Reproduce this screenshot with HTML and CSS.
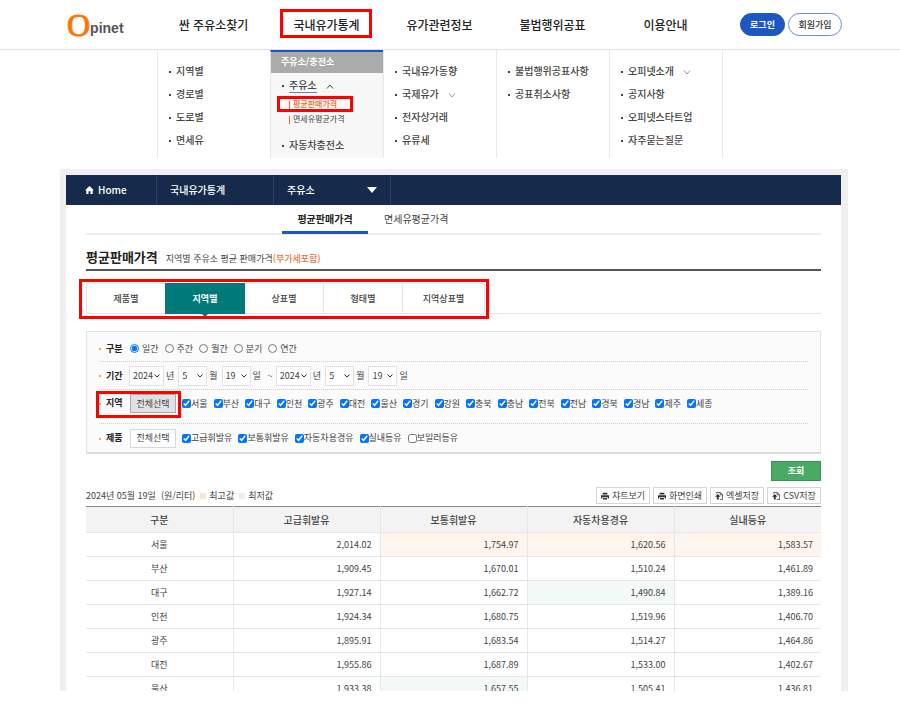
FILE: index.html
```html
<!DOCTYPE html>
<html lang="ko">
  <head>
    <meta charset="UTF-8" />
    <meta name="viewport" content="width=device-width, initial-scale=1.0" />
    <title>Opinet - 평균판매가격</title>
    <link rel="stylesheet" href="styles.css">
  </head>
  <body>
    <header class="header">
      <a href="#" class="logo"><span class="logo-o">O</span><span class="logo-text">pinet</span></a>
      <nav class="gnb">
        <a href="#">싼 주유소찾기</a>
        <a href="#" class="mark mark-gnb">국내유가통계</a>
        <a href="#">유가관련정보</a>
        <a href="#">불법행위공표</a>
        <a href="#">이용안내</a>
      </nav>
      <div class="user">
        <button type="button" class="login">로그인</button>
        <button type="button" class="join">회원가입</button>
      </div>
    </header>

    <!-- Drop-down menu -->
    <div class="submenu">
      <ul class="menu">
        <li><a href="#">지역별</a></li>
        <li><a href="#">경로별</a></li>
        <li><a href="#">도로별</a></li>
        <li><a href="#">면세유</a></li>
      </ul>
      <div class="menu-active">
        <h2>주유소/충전소</h2>
        <ul>
          <li><a href="#" class="current">주유소</a><svg class="arrow open" viewBox="0 0 8 5"><path d="M1 4.5 4 1l3 3.5" /></svg>
            <ul class="depth3">
              <li class="mark mark-depth"><a href="#" class="on">평균판매가격</a></li>
              <li><a href="#">면세유평균가격</a></li>
            </ul>
          </li>
          <li><a href="#">자동차충전소</a></li>
        </ul>
      </div>
      <ul class="menu">
        <li><a href="#">국내유가동향</a></li>
        <li><a href="#">국제유가</a><svg class="arrow" viewBox="0 0 8 5"><path d="M1 .5 4 4l3-3.5" /></svg></li>
        <li><a href="#">전자상거래</a></li>
        <li><a href="#">유류세</a></li>
      </ul>
      <ul class="menu">
        <li><a href="#">불법행위공표사항</a></li>
        <li><a href="#">공표취소사항</a></li>
      </ul>
      <ul class="menu">
        <li><a href="#">오피넷소개</a><svg class="arrow" viewBox="0 0 8 5"><path d="M1 .5 4 4l3-3.5" /></svg></li>
        <li><a href="#">공지사항</a></li>
        <li><a href="#">오피넷스타트업</a></li>
        <li><a href="#">자주묻는질문</a></li>
      </ul>
    </div>

    <main class="frame">
      <nav class="location">
        <a href="#" class="home">
          <svg viewBox="0 0 10 9"><path d="M5 0 10 4.7H8.6V9H6.1V6H3.9v3H1.4V4.7H0z" /></svg>Home
        </a>
        <a href="#">국내유가통계</a>
        <a href="#">주유소<svg class="caret" viewBox="0 0 10 6"><path d="M0 0h10L5 6z" /></svg></a>
      </nav>

      <div class="content">
        <nav class="subtabs">
          <a href="#" class="on">평균판매가격</a>
          <a href="#">면세유평균가격</a>
        </nav>

        <div class="title">
          <h1>평균판매가격</h1>
          <p>지역별 주유소 평균 판매가격<em>(부가세포함)</em></p>
        </div>

        <div class="tabs">
          <div class="tab-list mark mark-tabs">
            <a href="#">제품별</a>
            <a href="#" class="on">지역별</a>
            <a href="#">상표별</a>
            <a href="#">형태별</a>
            <a href="#">지역상표별</a>
          </div>
        </div>

        <!-- Search conditions -->
        <form class="search">
          <div class="box">
            <div class="row row-type">
              <strong>구분</strong>
              <label><input type="radio" name="type" checked />일간</label>
              <label><input type="radio" name="type" />주간</label>
              <label><input type="radio" name="type" />월간</label>
              <label><input type="radio" name="type" />분기</label>
              <label><input type="radio" name="type" />연간</label>
            </div>
            <div class="row row-term">
              <strong>기간</strong>
              <label><select class="year"><option>2024</option></select>년</label>
              <label><select><option>5</option></select>월</label>
              <label><select><option>19</option></select>일</label>
              <span class="tilde">~</span>
              <label><select class="year"><option>2024</option></select>년</label>
              <label><select><option>5</option></select>월</label>
              <label><select><option>19</option></select>일</label>
            </div>
            <div class="row row-area">
              <div class="mark mark-area">
                <strong>지역</strong>
                <button type="button" class="all pressed">전체선택</button>
              </div>
              <label><input type="checkbox" checked />서울</label>
              <label><input type="checkbox" checked />부산</label>
              <label><input type="checkbox" checked />대구</label>
              <label><input type="checkbox" checked />인천</label>
              <label><input type="checkbox" checked />광주</label>
              <label><input type="checkbox" checked />대전</label>
              <label><input type="checkbox" checked />울산</label>
              <label><input type="checkbox" checked />경기</label>
              <label><input type="checkbox" checked />강원</label>
              <label><input type="checkbox" checked />충북</label>
              <label><input type="checkbox" checked />충남</label>
              <label><input type="checkbox" checked />전북</label>
              <label><input type="checkbox" checked />전남</label>
              <label><input type="checkbox" checked />경북</label>
              <label><input type="checkbox" checked />경남</label>
              <label><input type="checkbox" checked />제주</label>
              <label><input type="checkbox" checked />세종</label>
            </div>
            <div class="row row-product">
              <strong>제품</strong>
              <button type="button" class="all">전체선택</button>
              <label><input type="checkbox" checked />고급휘발유</label>
              <label><input type="checkbox" checked />보통휘발유</label>
              <label><input type="checkbox" checked />자동차용경유</label>
              <label><input type="checkbox" checked />실내등유</label>
              <label><input type="checkbox" />보일러등유</label>
            </div>
          </div>
          <button type="button" class="submit">조회</button>
        </form>

        <div class="tools">
          <p>2024년 05월 19일 &nbsp;(원/리터)</p>
          <span class="legend high">최고값</span>
          <span class="legend low">최저값</span>
          <div class="buttons">
            <button type="button"><svg viewBox="0 0 10 10"><path d="M2 1h6v2H2zM0 4h10v4H8.5V6.5h-7V8H0zM2.5 7.5h5v2h-5z" /></svg>챠트보기</button>
            <button type="button"><svg viewBox="0 0 10 10"><path d="M2 1h6v2H2zM0 4h10v4H8.5V6.5h-7V8H0zM2.5 7.5h5v2h-5z" /></svg>화면인쇄</button>
            <button type="button"><svg viewBox="0 0 10 10"><path d="M0 6 3.5 2.5 7 6H4.7v3.5H2.3V6z" /><path class="line" d="M2 2V.5h4.500L9.500 3.500v6H6M6.500.5v3h3" /></svg>엑셀저장</button>
            <button type="button"><svg viewBox="0 0 10 10"><path d="M0 6 3.5 2.5 7 6H4.7v3.5H2.3V6z" /><path class="line" d="M2 2V.5h4.500L9.500 3.500v6H6M6.500.5v3h3" /></svg>CSV저장</button>
          </div>
        </div>

        <table class="prices">
          <thead>
            <tr><th>구분</th><th>고급휘발유</th><th>보통휘발유</th><th>자동차용경유</th><th>실내등유</th></tr>
          </thead>
          <tbody>
            <tr><th>서울</th><td>2,014.02</td><td class="high">1,754.97</td><td class="high">1,620.56</td><td class="high">1,583.57</td></tr>
            <tr><th>부산</th><td>1,909.45</td><td>1,670.01</td><td>1,510.24</td><td>1,461.89</td></tr>
            <tr><th>대구</th><td>1,927.14</td><td>1,662.72</td><td class="low">1,490.84</td><td>1,389.16</td></tr>
            <tr><th>인천</th><td>1,924.34</td><td>1,680.75</td><td>1,519.96</td><td>1,406.70</td></tr>
            <tr><th>광주</th><td>1,895.91</td><td>1,683.54</td><td>1,514.27</td><td>1,464.86</td></tr>
            <tr><th>대전</th><td>1,955.86</td><td>1,687.89</td><td>1,533.00</td><td>1,402.67</td></tr>
            <tr><th>울산</th><td>1,933.38</td><td class="low">1,657.55</td><td>1,505.41</td><td>1,436.81</td></tr>
          </tbody>
        </table>
      </div>
    </main>
  </body>
</html>
```
FILE: styles.css
```css
* {
  box-sizing: border-box;
}
body {
  margin: 0;
  padding-bottom: 23px;
  height: 100vh;
  display: flex;
  flex-direction: column;
  font-family: "Noto Sans CJK KR", sans-serif;
  font-size: 9px;
  line-height: 14px;
  color: #444;
  background: #fff;
}
h1, h2, p, ul {
  margin: 0;
  padding: 0;
}
ul {
  list-style: none;
}
a {
  color: inherit;
  text-decoration: none;
}
button, select {
  font: inherit;
  color: inherit;
  padding: 0;
}
em {
  font-style: normal;
  font-weight: 500;
  color: #e8743b;
}

/* red highlight boxes */
.mark {
  position: relative;
}
.mark::after {
  content: "";
  position: absolute;
  border: 3px solid #f00;
  pointer-events: none;
}
.mark-gnb::after {
  inset: 8px 11px 11px 10px;
}
.mark-depth::after {
  inset: 0 30px -1px 6px;
}
.mark-tabs::after {
  inset: -4px -4px -5px -7px;
}
.mark-area::after {
  inset: -3px -5px -5px -3px;
}

/* header */
.header {
  display: flex;
  align-items: center;
  height: 50px;
  border-bottom: 1px solid #e2e2e2;
}
.logo {
  display: flex;
  align-items: center;
  width: 157px;
  height: 44px;
  padding-left: 67px;
}
.logo-o {
  font: 32px/32px "Liberation Serif", serif;
  color: #ff7500;
  -webkit-text-stroke: 1px #ff7500;
}
.logo-text {
  padding-top: 6px;
  font: bold 14px/20px "Liberation Sans", sans-serif;
  color: #555;
}
.gnb {
  display: flex;
}
.gnb a {
  width: 113px;
  text-align: center;
  font-size: 12px;
  font-weight: 500;
  line-height: 48px;
  color: #222;
}
.user {
  display: flex;
  gap: 3px;
  margin-left: 18px;
}
.user button {
  height: 23px;
  border: 1px solid #1d57c4;
  border-radius: 12px;
  font-weight: 500;
}
.user .login {
  width: 45px;
  background: #1d57c4;
  color: #fff;
  font-weight: 700;
}
.user .join {
  width: 54px;
  background: #fff;
  border-color: #6b91dc;
  color: #333;
}

/* submenu */
.submenu {
  display: flex;
  width: 566px;
  height: 108px;
  margin: 0 0 11px 157px;
  border-right: 1px solid #e8e8e8;
  font-size: 10px;
  font-weight: 500;
}
.menu, .menu-active {
  width: 113px;
  border-left: 1px solid #e8e8e8;
}
.menu {
  padding: 9px 0 0 11px;
  line-height: 23px;
}
.menu > li::before, .menu-active > ul > li::before {
  content: "";
  display: inline-block;
  width: 2px;
  height: 2px;
  margin-right: 5px;
  vertical-align: middle;
  background: #444;
}
.arrow {
  width: 8px;
  height: 5px;
  margin-left: 9px;
  vertical-align: middle;
  fill: none;
  stroke: #999;
}
.arrow.open {
  stroke: #444;
}
.menu-active {
  background: #f7f7f7;
  border-top: 2px solid #1d57c4;
}
.menu-active h2 {
  height: 21px;
  padding-left: 10px;
  background: #ababab;
  color: #fff;
  font-size: 9px;
  font-weight: 700;
  line-height: 20px;
}
.menu-active > ul > li {
  padding-left: 11px;
  line-height: 23px;
}
.menu-active .current {
  border-bottom: 1px solid #5b84d6;
}
.depth3 {
  margin: 0 0 7px -11px;
  font-size: 8px;
  font-weight: 400;
}
.depth3 li {
  height: 15px;
  padding-left: 18px;
  line-height: 15px;
}
.depth3 a::before {
  content: "";
  display: inline-block;
  width: 1px;
  height: 8px;
  margin-right: 3px;
  vertical-align: middle;
  background: #f0682a;
}
.depth3 .on {
  font-weight: 500;
  color: #f0682a;
}

/* page frame */
.frame {
  flex: 1;
  min-height: 0;
  margin: 0 52px 0 60px;
  border: 6px solid #f0efed;
  border-right-width: 7px;
  border-bottom: 0;
  overflow: hidden;
}
.location {
  display: flex;
  height: 30px;
  background: #162b4b;
  color: #fff;
  font-size: 10px;
  font-weight: 500;
  line-height: 30px;
}
.location a {
  display: flex;
  align-items: center;
  width: 117px;
  padding: 0 13px;
  border-right: 1px solid #2c4163;
}
.location .home {
  width: 91px;
  padding-left: 19px;
}
.location svg {
  fill: #fff;
}
.home svg {
  width: 9px;
  height: 8px;
  margin-right: 4px;
}
.location .caret {
  width: 10px;
  height: 6px;
  margin-left: auto;
}
.content {
  padding: 0 20px;
}
.subtabs {
  display: flex;
  gap: 16px;
  height: 30px;
  padding-left: 196px;
  border-bottom: 2px solid #eee;
  font-size: 10px;
  line-height: 28px;
}
.subtabs .on {
  width: 86px;
  height: 29px;
  border-bottom: 3px solid #1d57c4;
  text-align: center;
  font-weight: 700;
  color: #222;
}
.title {
  display: flex;
  align-items: center;
  gap: 8px;
  height: 36px;
  padding-top: 10px;
  border-bottom: 2px solid #555;
}
.title h1 {
  font-size: 13px;
  font-weight: 700;
  line-height: 20px;
  color: #222;
}
.title p {
  padding-top: 4px;
}

/* tabs */
.tabs {
  display: flex;
  height: 31px;
  margin-top: 12px;
  border-bottom: 1px solid #e5e5e5;
}
.tab-list {
  display: flex;
  height: 31px;
}
.tab-list a {
  width: 80px;
  margin-right: -1px;
  border: 1px solid #e5e5e5;
  text-align: center;
  font-weight: 500;
  line-height: 30px;
}
.tab-list a:last-child {
  width: 83px;
  margin-right: 0;
}
.tab-list .on {
  position: relative;
  background: #00797a;
  border-color: #00797a;
  color: #fff;
  font-weight: 700;
}
.tab-list .on::after {
  content: "";
  position: absolute;
  top: 100%;
  left: 50%;
  margin-left: -4px;
  border: 4px solid transparent;
  border-top-color: #00797a;
  border-bottom: 0;
}

/* search box */
.search {
  display: flex;
  flex-direction: column;
  align-items: flex-end;
  gap: 7px;
  margin-top: 17px;
}
.box {
  width: 100%;
  padding: 0 12px;
  border: 1px solid #e2e2e2;
  border-bottom: 2px solid #dcdcdc;
  background: #fbfbfb;
}
.row {
  display: flex;
  align-items: center;
  height: 28px;
  border-bottom: 1px dotted #ccc;
}
.row strong {
  width: 31px;
  color: #222;
}
.row strong::before {
  content: "";
  display: inline-block;
  width: 2px;
  height: 2px;
  margin-right: 5px;
  vertical-align: middle;
  background: #f0a070;
}
.row label {
  display: flex;
  align-items: center;
}
.row input {
  width: 9px;
  height: 9px;
  margin: 0;
}
.row-type {
  height: 30px;
  padding-top: 4px;
}
.row-type label {
  margin-right: 6px;
}
.row-type input {
  margin-right: 3px;
}
.row-term strong {
  width: 30px;
}
.row-term label {
  gap: 2px;
  margin-right: 4px;
}
.row-term select {
  appearance: none;
  width: 29px;
  height: 20px;
  padding-left: 3px;
  border: 1px solid #e2e2e2;
  border-radius: 0;
  background: #fff url("data:image/svg+xml,%3Csvg xmlns='http://www.w3.org/2000/svg' viewBox='0 0 6 4'%3E%3Cpath d='M.5.500 3 3 5.500.5' fill='none' stroke='%23333'/%3E%3C/svg%3E") no-repeat right 3px center / 6px 4px;
}
.row-term .year {
  width: 35px;
}
.tilde {
  width: 11px;
  text-align: center;
}
.row-area {
  align-items: flex-start;
  height: 34px;
  padding-top: 4px;
}
.mark-area {
  display: flex;
}
.row-area strong {
  line-height: 17px;
}
.row-area label {
  height: 19px;
}
.row-area label, .row-product label {
  margin-left: 6px;
}
.row-product {
  border-bottom: 0;
}
.all {
  width: 46px;
  height: 19px;
  border: 1px solid #d8d8d8;
  background: #fff;
}
.all.pressed {
  border-color: #aaa;
  background: #e1e1e1;
}
.submit {
  width: 50px;
  height: 20px;
  border: 1px solid #35964f;
  background: #49aa63;
  color: #fff;
  font-weight: 700;
}

/* table */
.tools {
  display: flex;
  align-items: center;
  gap: 5px;
  height: 17px;
  margin: 6px 0 2px;
}
.legend::before {
  content: "";
  display: inline-block;
  width: 6px;
  height: 6px;
  margin-right: 3px;
}
.legend.high::before {
  background: #fde5d3;
}
.legend.low::before {
  background: #e2f2ec;
}
.buttons {
  display: flex;
  gap: 3px;
  margin-left: auto;
}
.buttons button {
  display: flex;
  align-items: center;
  justify-content: center;
  gap: 3px;
  width: 54px;
  height: 17px;
  border: 1px solid #d5d5d5;
  background: #fff;
}
.buttons svg {
  width: 8px;
  height: 8px;
  fill: #333;
}
.buttons .line {
  fill: none;
  stroke: #333;
}
.prices {
  width: 100%;
  table-layout: fixed;
  border-collapse: collapse;
  border-top: 1px solid #888;
}
.prices th, .prices td {
  height: 24px;
  padding: 1px 0 0;
  border: 1px solid #e4e7ea;
  border-width: 0 0 1px 1px;
  font-weight: 400;
}
.prices th:first-child {
  border-left: 0;
}
.prices thead th {
  height: 26px;
  padding: 0;
  background: #f3f3f3;
  font-size: 10px;
  font-weight: 500;
}
.prices td {
  padding-right: 8px;
  text-align: right;
}
.prices .high {
  background: #fff5ec;
}
.prices .low {
  background: #f3f9f5;
}
```
